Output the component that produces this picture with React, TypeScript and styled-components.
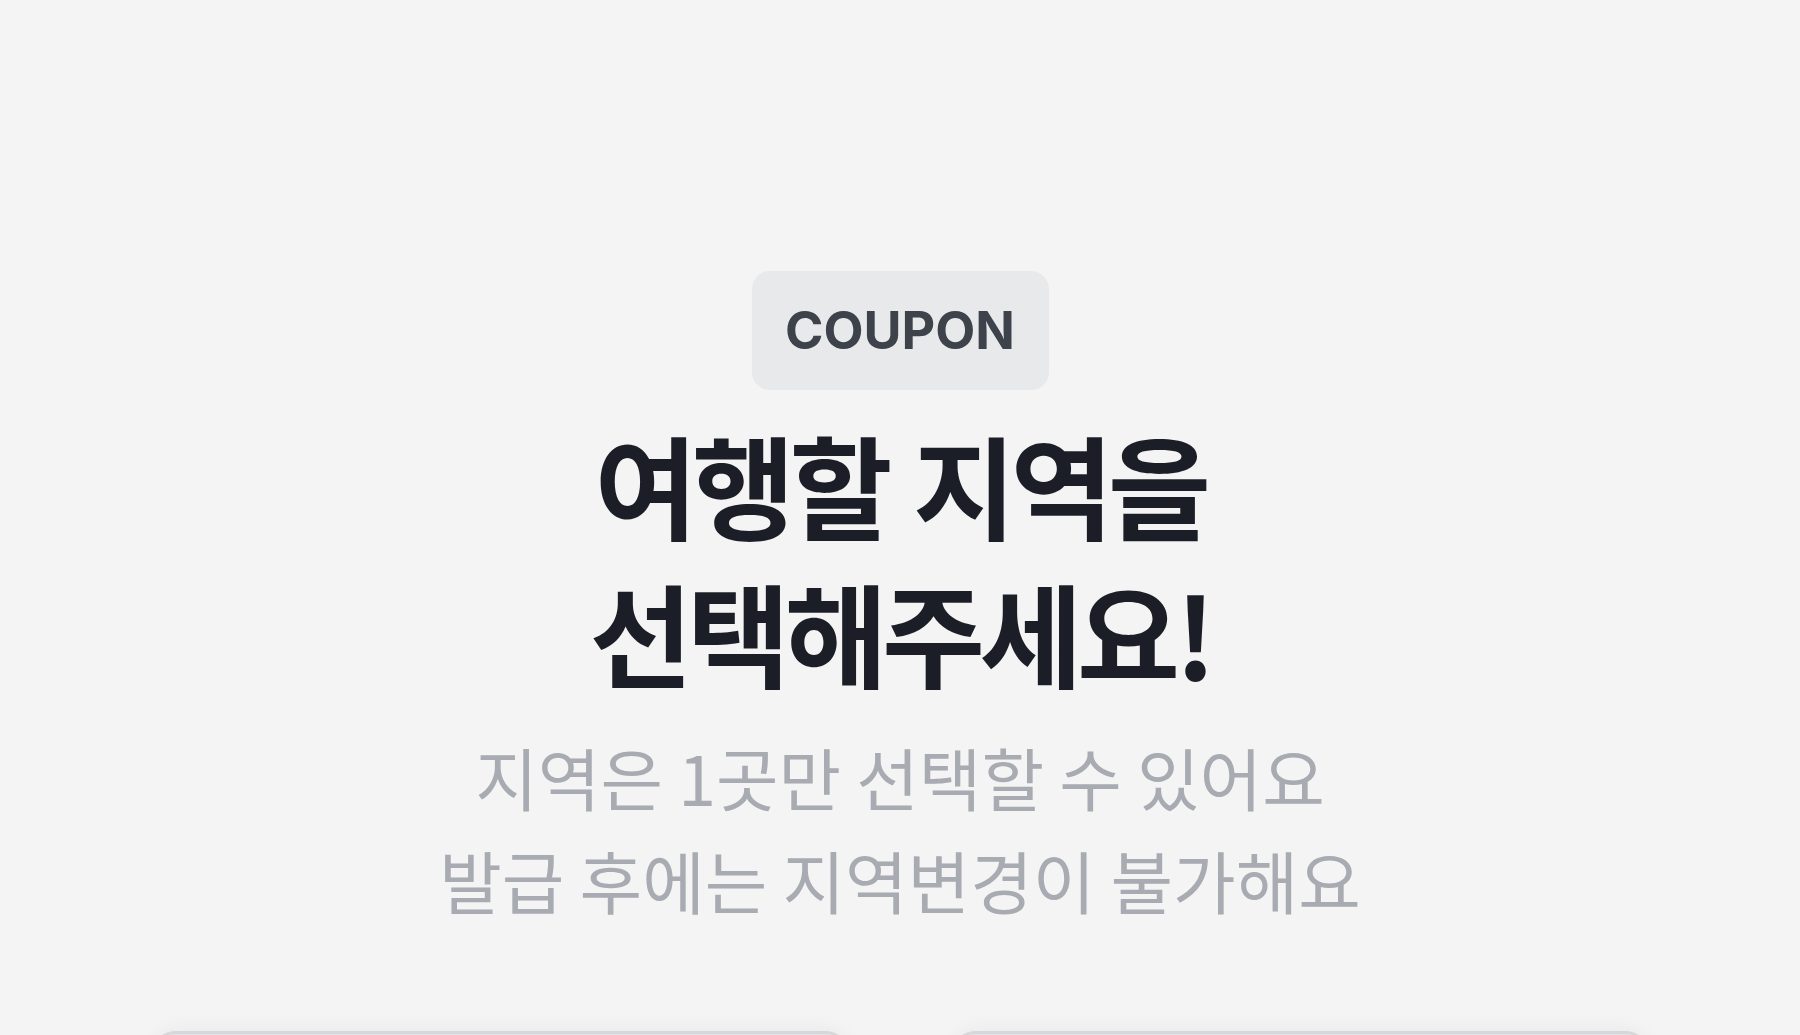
import React from 'react'
import styled, { createGlobalStyle } from 'styled-components'

const GlobalStyle = createGlobalStyle`
  html, body {
    margin: 0;
    padding: 0;
    height: 100%;
    overflow: hidden;
    background: #f4f4f4;
  }
  body {
    font-family: "Noto Sans CJK KR", "Noto Sans", sans-serif;
  }
`

const Page = styled.main`
  display: flex;
  flex-direction: column;
  align-items: center;
  padding-top: 271px;
  min-height: 100vh;
  box-sizing: border-box;
`

const Badge = styled.div`
  display: flex;
  align-items: center;
  justify-content: center;
  width: 297px;
  height: 119px;
  border-radius: 18px;
  background: #e8e9eb;
  color: #3e424b;
  font-family: Inter, "Noto Sans", sans-serif;
  font-weight: 700;
  font-size: 52px;
  letter-spacing: 0;
`

const Title = styled.h1`
  margin: 19px 0 0;
  text-align: center;
  color: #1b1e26;
  font-weight: 700;
  font-size: 112px;
  line-height: 148px;
  letter-spacing: -5.5px;
  word-spacing: 6px;
`

const Description = styled.p`
  margin: 20px 0 0;
  text-align: center;
  color: #a8abb1;
  font-weight: 400;
  font-size: 68px;
  line-height: 103px;
  letter-spacing: 0;
`

const CardRow = styled.section`
  display: grid;
  grid-template-columns: repeat(2, 695px);
  gap: 105px;
  margin-top: 100px;
`

const Card = styled.div`
  height: 360px;
  border-radius: 22px;
  background: #e3e4e7;
  border-top: 3px solid #d6d7da;
  box-shadow: 0 -4px 18px rgba(0, 0, 0, 0.04);
`

export default function App() {
  return (
    <>
      <GlobalStyle />
      <Page>
        <Badge>COUPON</Badge>
        <Title>
          여행할 지역을
          <br />
          선택해주세요!
        </Title>
        <Description>
          지역은 1곳만 선택할 수 있어요
          <br />
          발급 후에는 지역변경이 불가해요
        </Description>
        <CardRow>
          <Card />
          <Card />
        </CardRow>
      </Page>
    </>
  )
}
